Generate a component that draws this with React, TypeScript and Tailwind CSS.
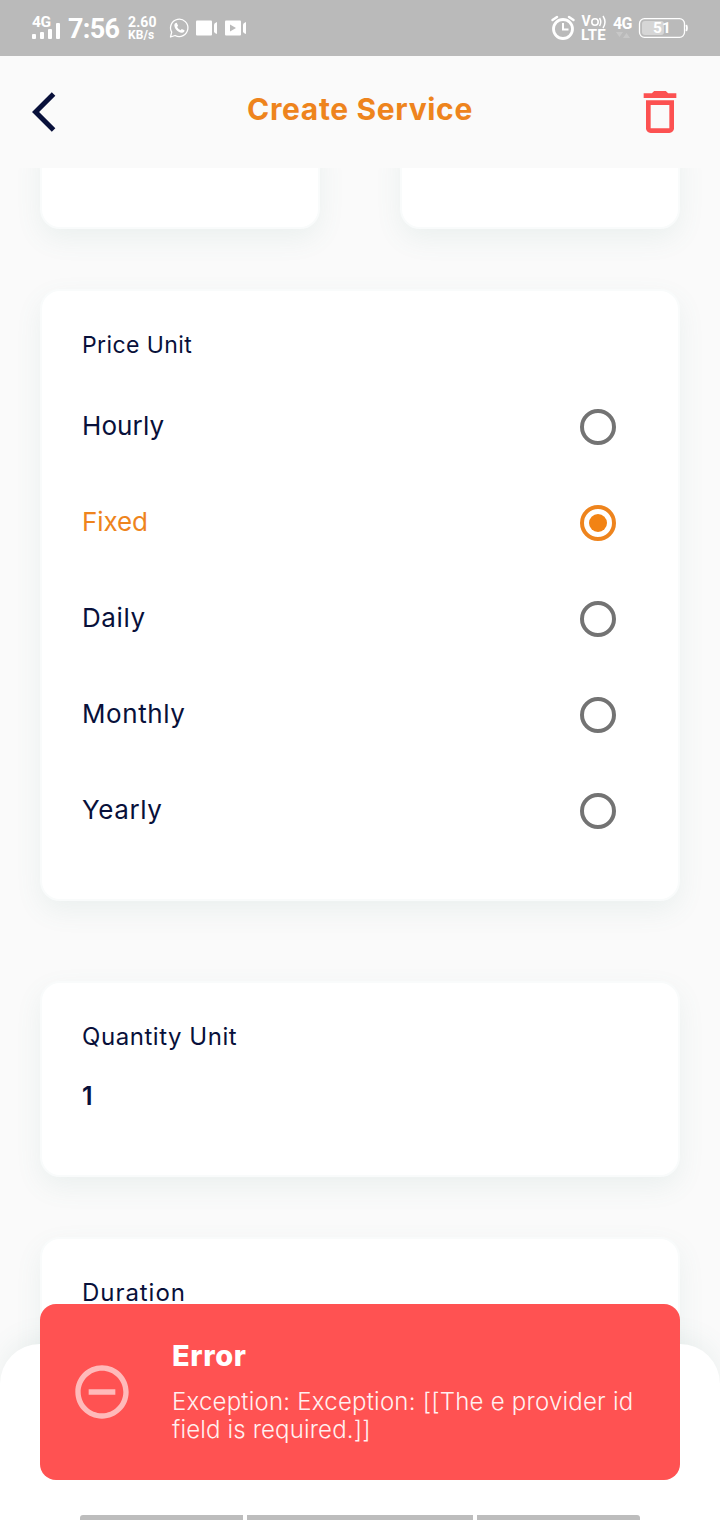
import type { ReactNode } from "react";
import { MdArrowBackIos, MdDeleteOutline, MdRemoveCircleOutline } from "react-icons/md";

const units = [
  { name: "Hourly", tracking: "tracking-[0.1px]" },
  { name: "Fixed", tracking: "tracking-[-0.1px]" },
  { name: "Daily", tracking: "tracking-[0.6px]" },
  { name: "Monthly", tracking: "tracking-[0.6px]" },
  { name: "Yearly", tracking: "tracking-[0.6px]" },
];

function Card({ className, children }: { className: string; children?: ReactNode }) {
  return (
    <section
      className={`rounded-[20px] border-2 border-[#f9fbfb] bg-white shadow-[0_10px_27px_rgba(90,140,130,0.09)] ${className}`}
    >
      {children}
    </section>
  );
}

function StatusBar() {
  return (
    <div className="flex h-14 shrink-0 items-center bg-[#bababa] pl-[30px] font-[Roboto,sans-serif] font-bold text-white">
      <svg width="31" height="30" viewBox="-2 -1 31 30" fill="currentColor">
        <text x="0" y="13" fontSize="15.5" letterSpacing="-0.3">4G</text>
        <rect x="0" y="20" width="4" height="5" rx="1" />
        <rect x="8" y="18" width="4" height="7" rx="1" />
        <rect x="16" y="15" width="4" height="10" rx="1" />
        <rect x="24" y="9" width="4" height="16" rx="1" />
      </svg>
      <span className="ml-[7px] w-[53px] pt-[3px] text-[27px] leading-none tracking-[-0.7px]">7:56</span>
      <div className="ml-[7px] flex w-[40px] flex-col pt-[2px] leading-[13px]">
        <span className="text-[14px] tracking-[0.1px]">2.60</span>
        <span className="text-[12px] tracking-[0.1px]">KB/s</span>
      </div>
      <svg className="mb-px" width="22" height="22" viewBox="0 0 22 22" fill="none" stroke="currentColor">
        <path d="M2.500 20l1.200-4.800a8.700 8.700 0 1 1 3.400 3.300z" strokeWidth="1.300" strokeLinejoin="round" />
        <path
          d="M7.200 6.200l1.500-.4 1.400 2.900-1 1.300c.8 1.500 1.900 2.500 3.400 3.200l1.300-1.300 2.700 1.400c.2 1.600-1.300 2.800-2.900 2.500-3.500-.7-6.500-3.500-7.200-6.900-.2-1.100.1-2 .8-2.700z"
          fill="currentColor"
          stroke="none"
        />
      </svg>
      <svg className="ml-[6px]" width="22" height="16" viewBox="0 0 22 16" fill="currentColor">
        <rect width="16" height="15" y="0.5" rx="1" />
        <path d="M18 4.500q0-1.500 3-2.500v12q-3-1-3-2.500z" />
      </svg>
      <svg className="ml-[7px]" width="22" height="16" viewBox="0 0 22 16" fill="currentColor">
        <rect width="16" height="15" y="0.5" rx="1" />
        <path d="M18 4.500q0-1.500 3-2.500v12q-3-1-3-2.500z" />
        <path d="M5 4.500l6 3.500-6 3.500z" fill="#bababa" />
      </svg>
      <div className="ml-auto flex w-[169px] items-center">
        <svg width="24" height="26" viewBox="0 0 24 26" fill="none" stroke="currentColor" strokeLinecap="round">
          <circle cx="12" cy="14" r="9.500" strokeWidth="2.800" />
          <path d="M12 8v6.500h5.500" strokeWidth="2" strokeLinecap="butt" />
          <path d="M1.500 5L6 2M18 2l4.500 3" strokeWidth="2.400" />
        </svg>
        <svg className="ml-[4px]" width="31" height="32" viewBox="-2 -2 31 32" fill="currentColor">
          <text x="0.500" y="12" fontSize="14">V</text>
          <circle cx="14" cy="8" r="3.200" fill="none" stroke="currentColor" strokeWidth="1.600" />
          <path d="M18.500 4q2.500 4 0 8M22 2q4 6 0 12" fill="none" stroke="currentColor" strokeWidth="1.500" />
          <text x="0" y="26" fontSize="15" letterSpacing="0.200">LTE</text>
        </svg>
        <svg className="ml-[2px]" width="22" height="28" viewBox="-1 0 22 28" fill="currentColor">
          <text x="0" y="15" fontSize="16" letterSpacing="-0.700">4G</text>
          <path d="M3 18h7l-3.500 5zM10 24h7l-3.500-5z" opacity="0.200" />
        </svg>
        <svg className="ml-[4px]" width="50" height="20" viewBox="0 0 50 20" fill="none">
          <rect x="1.500" y="0.700" width="45" height="18.600" rx="5" stroke="white" strokeWidth="1.300" />
          <path d="M48.200 7q1.500 3 0 6" stroke="white" strokeWidth="1.800" />
          <rect x="4" y="3" width="22" height="14" rx="3" fill="#d6d6d6" />
          <text x="15" y="15.200" fontSize="15.500" fill="white">51</text>
        </svg>
      </div>
    </div>
  );
}

function Radio({ checked }: { checked: boolean }) {
  return (
    <span className={`flex size-9 items-center justify-center rounded-full border-4 ${checked ? "border-[#ee841d]" : "border-[#737373]"}`}>
      {checked && <span className="size-[18px] rounded-full bg-[#f28314]" />}
    </span>
  );
}

export default function App() {
  return (
    <div className="relative flex h-[1520px] w-[720px] flex-col overflow-hidden bg-[#fafafa] font-[Inter,sans-serif] text-[#08103a]">
      <StatusBar />
      <header className="flex h-28 shrink-0 items-center justify-between px-8">
        <div className="w-14">
          <MdArrowBackIos className="size-12" />
        </div>
        <h1 className="-mt-[6px] whitespace-nowrap text-[30px] font-bold tracking-[0.65px] text-[#ee841d]">Create Service</h1>
        <MdDeleteOutline className="size-14 text-[#fc5151]" />
      </header>
      <main className="flex min-h-0 flex-1 flex-col overflow-hidden px-10">
        <div className="-mt-10 flex shrink-0 justify-between">
          <Card className="h-[101px] w-[280px]" />
          <Card className="h-[101px] w-[280px]" />
        </div>
        <Card className="mt-[60px] h-[612px] shrink-0 px-10 pt-[38px]">
          <h2 className="text-[23px] leading-[32px] tracking-[0.4px]">Price Unit</h2>
          <div className="mt-[18px] flex flex-col pr-[22px]">
            {units.map(({ name, tracking }) => (
              <div key={name} className={`flex h-24 items-center justify-between ${name === "Fixed" ? "text-[#ee841d]" : ""}`}>
                <span className={`-mt-[3px] text-[26px] ${tracking}`}>{name}</span>
                <Radio checked={name === "Fixed"} />
              </div>
            ))}
          </div>
        </Card>
        <Card className="mt-[80px] h-[196px] shrink-0 px-10 pt-[38px]">
          <h2 className="text-[24px] leading-[32px] tracking-[0.55px]">Quantity Unit</h2>
          <p className="mt-[27px] text-[25px] font-semibold leading-[32px]">1</p>
        </Card>
        <Card className="mt-[60px] h-[300px] shrink-0 px-10 pt-[38px]">
          <h2 className="text-[24px] leading-[32px] tracking-[0.95px]">Duration</h2>
        </Card>
      </main>
      <div className="absolute inset-x-0 bottom-0 flex h-[176px] flex-col justify-end rounded-t-[40px] bg-white px-20 shadow-[0_-8px_24px_rgba(90,140,130,0.08)]">
        <div className="flex h-[5px] gap-1 overflow-hidden rounded-t-[3px]">
          <span className="w-[163px] bg-[#bdbdbd]" />
          <span className="w-[226px] bg-[#bdbdbd]" />
          <span className="flex-1 bg-[#bdbdbd]" />
        </div>
      </div>
      <div role="alert" className="absolute left-10 top-[1304px] flex h-[176px] w-[640px] items-center rounded-2xl bg-[#ff5252] pl-[30px] text-white">
        <MdRemoveCircleOutline className="size-16 shrink-0 text-[#ffbaba]" />
        <div className="-mt-[2px] ml-[38px] flex flex-col whitespace-nowrap">
          <strong className="text-[29px] font-extrabold leading-[36px] tracking-[0.6px]">Error</strong>
          <p className="mt-[14px] text-[24px] font-light leading-[28px] text-[#fff0f0]">
            <span className="block tracking-[0.22px]">Exception: Exception: [[The e provider id</span>
            <span className="block tracking-[0.15px]">field is required.]]</span>
          </p>
        </div>
      </div>
    </div>
  );
}
